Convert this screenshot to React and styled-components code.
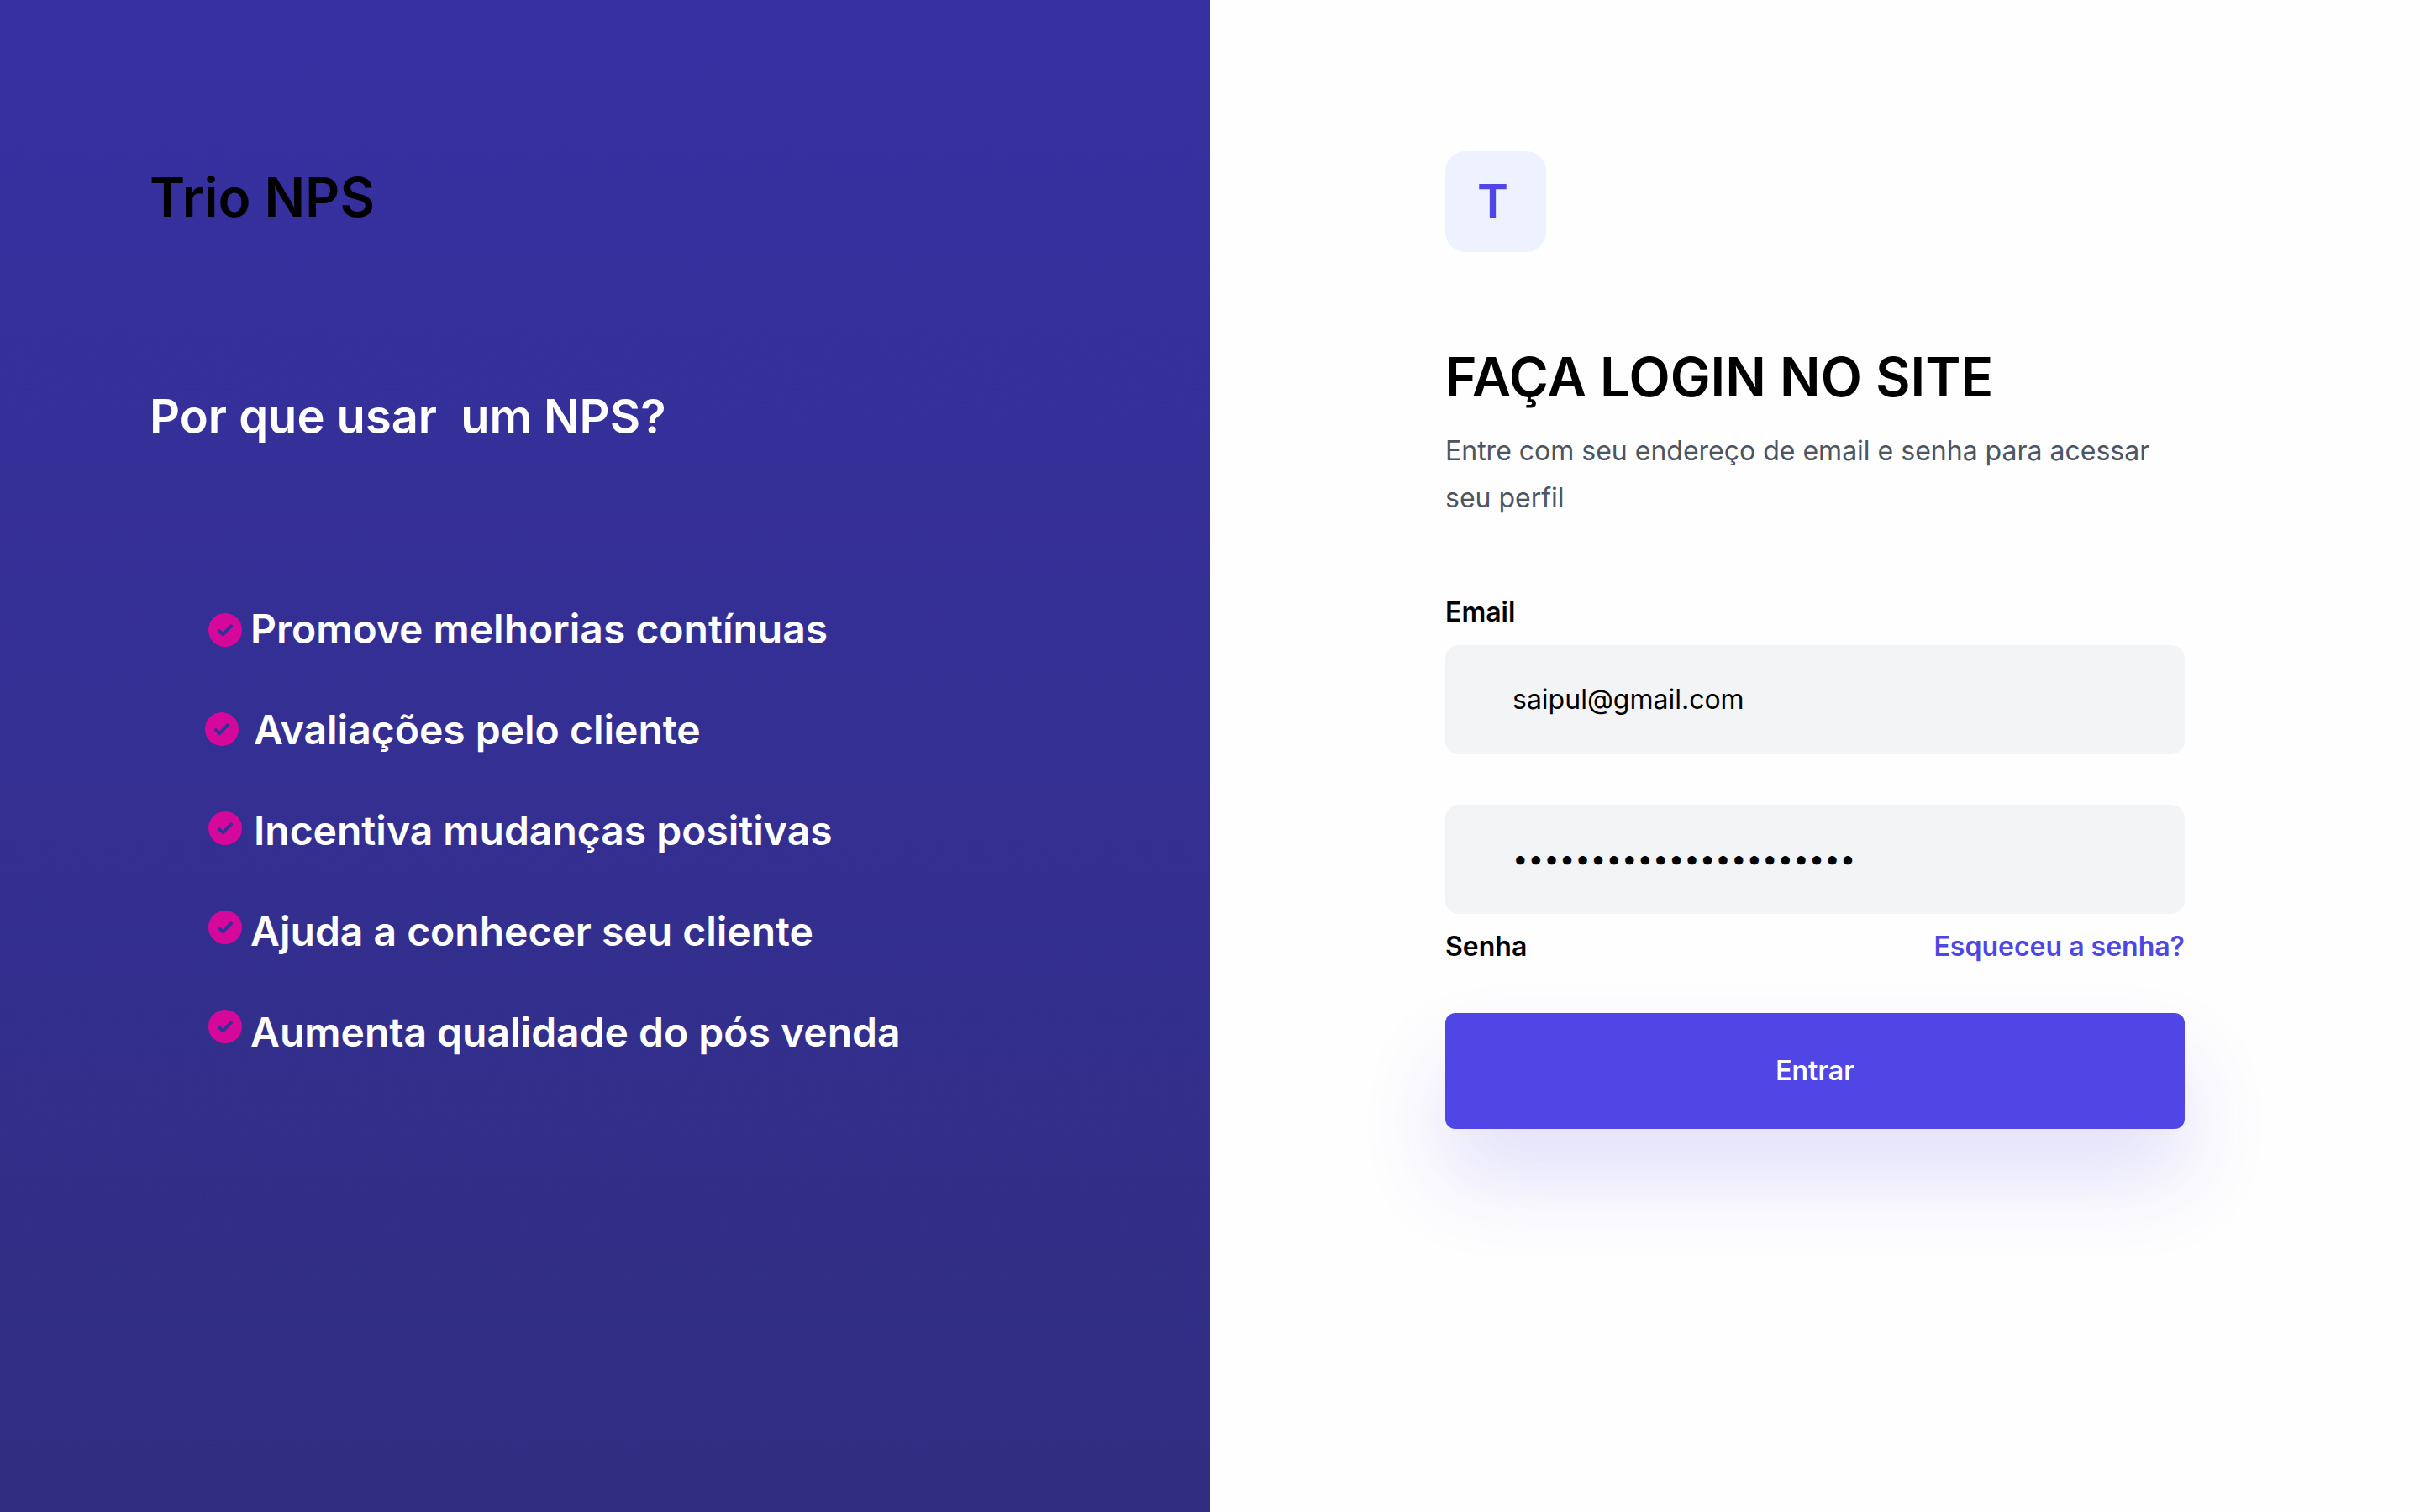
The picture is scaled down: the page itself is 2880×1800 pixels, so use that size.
import React from "react";
import styled, { createGlobalStyle } from "styled-components";

const GlobalStyle = createGlobalStyle`
  *, *::before, *::after { box-sizing: border-box; }
  body {
    margin: 0;
    background: #fefefe;
    color: #000;
    font-family: Inter, "Liberation Sans", sans-serif;
  }
  h1, h2, p, ul { margin: 0; padding: 0; }
`;

const Page = styled.div`
  display: grid;
  grid-template-columns: 1fr 1fr;
  min-height: 100vh;
`;

const Promo = styled.aside`
  padding: 195px 178px 120px;
  background: linear-gradient(180deg, #3730a3 0%, #312e81 100%);
`;

const Brand = styled.p`
  font-size: 64px;
  line-height: 80px;
  font-weight: 600;
`;

const Question = styled.h2`
  margin-top: 185px;
  font-size: 56px;
  line-height: 72px;
  font-weight: 600;
  color: #fff;
  white-space: pre-wrap;
`;

const Benefits = styled.div`
  display: flex;
  align-items: flex-start;
  gap: 10px;
  margin-top: 187px;
  padding-left: 66px;
`;

const Marks = styled.div`
  display: flex;
  flex-direction: column;
  align-items: flex-end;
  gap: 78px;
  width: 44px;
  padding-top: 11px;
`;

const Mark = styled.svg`
  display: block;
  width: 40px;
  height: 40px;
  align-self: ${(p) => (p.$outset ? "flex-start" : "flex-end")};
`;

const BenefitList = styled.ul`
  display: flex;
  flex-direction: column;
  gap: 60px;
  list-style: none;
`;

const Benefit = styled.li`
  padding-left: ${(p) => (p.$indent ? "4px" : "0")};
  font-size: 48px;
  line-height: 60px;
  font-weight: 600;
  color: #fff;
`;

const Login = styled.main`
  padding: 180px 280px 120px;
`;

const Logo = styled.div`
  display: flex;
  align-items: center;
  width: 120px;
  height: 120px;
  padding-left: 38px;
  border-radius: 24px;
  background: #eef2ff;
  color: #4f46e5;
  font-size: 56px;
  line-height: 72px;
  font-weight: 600;
`;

const Title = styled.h1`
  margin-top: 109px;
  font-size: 64px;
  line-height: 80px;
  font-weight: 600;
`;

const Intro = styled.p`
  margin-top: 20px;
  font-size: 32px;
  line-height: 56px;
  color: #4b5563;
`;

const Form = styled.form`
  display: flex;
  flex-direction: column;
  gap: 60px;
  margin-top: 89px;
`;

const Field = styled.div`
  display: flex;
  flex-direction: column;
  gap: 20px;
`;

const Label = styled.label`
  font-size: 32px;
  line-height: 38px;
  font-weight: 600;
`;

const Input = styled.input`
  width: 100%;
  height: 130px;
  padding: 0 80px 2px;
  border: 0;
  border-radius: 16px;
  outline: none;
  background: #f3f4f6;
  color: #000;
  font-family: inherit;
  font-size: ${(p) => (p.type === "password" ? "33px" : "32px")};
`;

const FieldFooter = styled.div`
  display: flex;
  justify-content: space-between;
`;

const ForgotLink = styled.a`
  color: #4f46e5;
  font-size: 32px;
  line-height: 38px;
  font-weight: 600;
  text-decoration: none;
`;

const Submit = styled.button`
  height: 138px;
  border: 0;
  border-radius: 12px;
  background: #4f46e5;
  box-shadow: 0 60px 100px rgba(79, 70, 229, 0.16);
  color: #fff;
  font-family: inherit;
  font-size: 32px;
  line-height: 38px;
  font-weight: 600;
  cursor: pointer;
`;

const benefits = [
  { text: "Promove melhorias contínuas" },
  { text: "Avaliações pelo cliente", outset: true, indent: true },
  { text: "Incentiva mudanças positivas", indent: true },
  { text: "Ajuda a conhecer seu cliente" },
  { text: "Aumenta qualidade do pós venda" },
];

function CheckMark({ outset }) {
  return (
    <Mark $outset={outset} viewBox="0 0 40 40" aria-hidden="true">
      <circle cx="20" cy="20" r="20" fill="#d6089b" />
      <path
        d="M13 21.2 L17.4 25.2 L27 15.4"
        fill="none"
        stroke="#343094"
        strokeWidth="4"
        strokeLinecap="round"
        strokeLinejoin="round"
      />
    </Mark>
  );
}

export default function App() {
  return (
    <>
      <GlobalStyle />
      <Page>
        <Promo>
          <Brand>Trio NPS</Brand>
          <Question>{"Por que usar  um NPS?"}</Question>
          <Benefits>
            <Marks>
              {benefits.map((b) => (
                <CheckMark key={b.text} outset={b.outset} />
              ))}
            </Marks>
            <BenefitList>
              {benefits.map((b) => (
                <Benefit key={b.text} $indent={b.indent}>
                  {b.text}
                </Benefit>
              ))}
            </BenefitList>
          </Benefits>
        </Promo>
        <Login>
          <Logo>T</Logo>
          <Title>FAÇA LOGIN NO SITE</Title>
          <Intro>Entre com seu endereço de email e senha para acessar seu perfil</Intro>
          <Form onSubmit={(e) => e.preventDefault()}>
            <Field>
              <Label htmlFor="email">Email</Label>
              <Input id="email" type="email" defaultValue="saipul@gmail.com" />
            </Field>
            <Field>
              <Input id="senha" type="password" defaultValue={"x".repeat(22)} />
              <FieldFooter>
                <Label htmlFor="senha">Senha</Label>
                <ForgotLink href="#recuperar">Esqueceu a senha?</ForgotLink>
              </FieldFooter>
            </Field>
            <Submit type="submit">Entrar</Submit>
          </Form>
        </Login>
      </Page>
    </>
  );
}
